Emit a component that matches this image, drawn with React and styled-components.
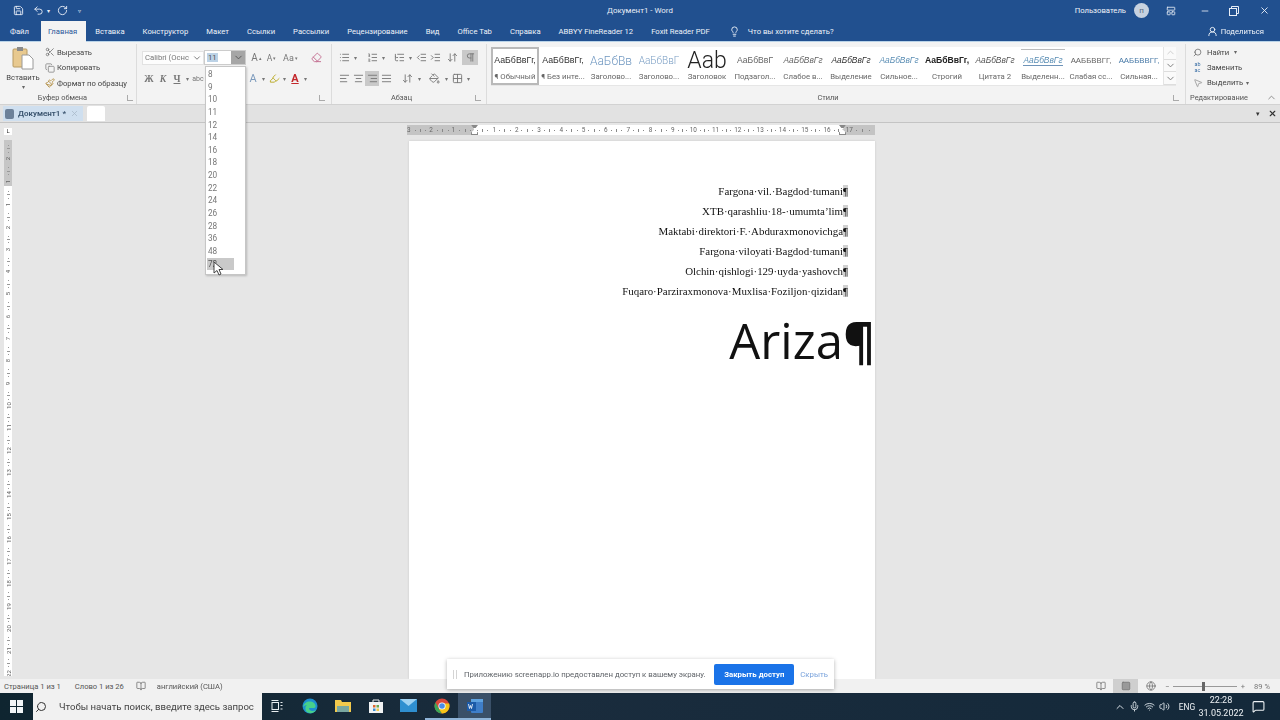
import React from "react";
import styled, { createGlobalStyle } from "styled-components";
import {
  Save, Undo2, RotateCw, Scissors, Copy, Paintbrush, ChevronDown, ChevronUp, Lightbulb, UserRound,
  Minus, X, Search, MousePointer2, List, ListOrdered, ListTree, IndentDecrease, IndentIncrease,
  AlignLeft, AlignCenter, AlignRight, AlignJustify, Eraser, Highlighter, PaintBucket, Grid2x2,
  BookOpen, Globe, Mic, Wifi, Volume2, MessageSquare,
  ArrowDownUp, Pilcrow, Square, LayoutPanelTop,
} from "lucide-react";

const Global = createGlobalStyle`
  html, body { margin: 0; padding: 0; background: #e6e6e6; }
  * { box-sizing: border-box; }
  svg { flex: none; }
  #root { width: 1280px; height: 720px; overflow: hidden; }
`;

const Screen = styled.div`
  position: relative; width: 1280px; height: 720px; display: flex; flex-direction: column;
  overflow: hidden; font-family: "Roboto", "Noto Sans", sans-serif; font-size: 7.7px; color: #444;
  filter: blur(0.4px);
`;
const Header = styled.header`
  height: 42px; flex: none; background: #21508f; color: #f0f4fa; display: flex; flex-direction: column;
  border-bottom: 1px solid #b9d3e8;
`;
const TitleRow = styled.div`
  height: 21px; flex: none; display: grid; grid-template-columns: 1fr auto 1fr; align-items: center;
`;
const Quick = styled.div`display: flex; align-items: center; gap: 9px; color: #e8eef7; padding-left: 13px;`;
const QuickCaret = styled.span`font-size: 6px; margin: 0 ${p => p.$r ?? -2}px 0 ${p => p.$l ?? -6}px;`;
const Title = styled.div`font-size: 7.9px; color: #e8eef7;`;
const WindowControls = styled.div`display: flex; align-items: center; justify-content: flex-end;`;
const UserName = styled.span`margin-right: 8px;`;
const Avatar = styled.span`
  width: 15px; height: 15px; border-radius: 50%; background: #c7d2e0; color: #5a6a80; font-size: 8px;
  display: flex; align-items: center; justify-content: center; margin-right: 3px;
`;
const WinBtn = styled.span`width: ${p => p.$w}px; display: flex; justify-content: center; color: #e8eef7;`;
const TabRow = styled.nav`height: 20px; display: flex; align-items: stretch; padding-left: 10px;`;
const Tab = styled.div`
  display: flex; align-items: center; white-space: nowrap;
  margin-right: ${p => (p.$active ? 9 : 18)}px; padding: ${p => (p.$active ? "0 9px 0 7px" : "0")}; margin-left: ${p => (p.$active ? "-6px" : 0)};
  background: ${p => (p.$active ? "#f3f3f3" : "transparent")}; color: ${p => (p.$active ? "#2b579a" : "#eef3fa")};
  height: ${p => (p.$active ? "21px" : "auto")};
`;
const Share = styled.div`margin-left: auto; display: flex; align-items: center; gap: 3px; padding-right: 16px;`;
const Hint = styled.span`display: flex; align-items: center; gap: 8px; color: #eef3fa; margin-left: 1px;`;

const Ribbon = styled.section`
  height: 63px; flex: none; background: #f3f3f3; display: flex; position: relative; border-bottom: 1px solid #d2d2d2;
`;
const Group = styled.div`
  width: ${p => p.$w}px; flex: none; display: flex; flex-direction: column; padding: ${p => p.$pad || "0"};
  border-right: ${p => (p.$last ? "0" : "1px solid #dcdcdc")}; margin: 2px 0 0; position: relative;
`;
const GroupBody = styled.div`flex: 1; min-height: 0; display: flex;`;
const GroupLabel = styled.div`
  height: 12px; flex: none; text-align: center; font-size: 7.4px; line-height: 11px; color: #555;
  padding-right: ${p => p.$shift || 0}px; white-space: nowrap;
`;
const Launcher = styled.span`
  position: absolute; right: ${p => p.$r || 3}px; bottom: 3px; width: 6px; height: 6px; border-left: 1px solid #aaa; border-bottom: 1px solid #aaa;
`;
const Paste = styled.div`
  width: 38px; display: flex; flex-direction: column; align-items: center; margin-left: 4px; color: #444; padding-top: 2px;
`;
const PasteLabel = styled.div`margin-top: 3px; line-height: 10px;`;
const MiniCaret = styled.span`color: #666; font-size: 6px; line-height: 8px;`;
const ClipList = styled.div`display: flex; flex-direction: column; gap: 3.6px; margin-left: 3px; padding-top: 2px;`;
const ClipRow = styled.div`display: flex; align-items: center; gap: 2px; height: 12px; white-space: nowrap; color: #444;`;
const Rows = styled.div`display: flex; flex-direction: column; padding-top: 6px; gap: 6px;`;
const Row = styled.div`display: flex; align-items: center; height: 15px;`;
const FontField = styled.div`
  width: 62px; height: 14px; display: flex; align-items: center; justify-content: space-between; background: #fdfdfd;
  border: 1px solid #e2e2e2; padding: 0 1px 0 2px; color: #777; white-space: nowrap; overflow: hidden;
`;
const SizeField = styled.div`
  width: 42px; height: 15px; display: flex; align-items: center; background: #fff; margin-right: 3px; border: 1px solid #ccc; color: #555;
`;
const SizeValue = styled.span`flex: 1; padding-left: 2px;`;
const SizeSel = styled.span`background: #bcd2e6; padding: 0 1px;`;
const SizeArrow = styled.span`width: 14px; height: 100%; background: #a6a6a6; display: flex; align-items: center; justify-content: center; color: #555;`;
const Tool = styled.span`
  width: ${p => p.$w || 14}px; height: 15px; margin-right: ${p => p.$mr || 0}px; flex: none;
  display: flex; align-items: center; justify-content: center; gap: 1px;
  background: ${p => (p.$on ? "#c9c9c9" : "transparent")}; color: ${p => p.$c || "#777"};
  font-size: ${p => p.$fs || 9}px; font-weight: ${p => (p.$b ? 700 : 400)}; font-style: ${p => (p.$i ? "italic" : "normal")};
  text-decoration: ${p => (p.$u ? "underline" : "none")}; font-family: ${p => (p.$serif ? '"Liberation Serif", serif' : "inherit")};
`;
const Sup = styled.sup`font-size: 5px; line-height: 0;`;
const Gallery = styled.div`
  width: 685px; height: 39px; background: #fff; margin: 3px 0 0 4px; display: flex; border-bottom: 1px solid #e6e6e6; flex: none;
`;
const StyleCard = styled.div`
  width: 48px; flex: none; height: 38px; display: flex; flex-direction: column; align-items: center; overflow: hidden;
  border: ${p => (p.$on ? "2px solid #b9b9b9" : "2px solid transparent")}; white-space: nowrap;
`;
const Preview = styled.div`
  height: 23px; display: flex; align-items: center; justify-content: center; width: 100%; overflow: hidden; white-space: nowrap; line-height: 1;
  font-family: ${p => p.$font || '"Liberation Sans", sans-serif'}; font-size: ${p => p.$fs}px; color: ${p => p.$c || "#333"};
  font-weight: ${p => (p.$b ? 700 : p.$w || 400)}; font-style: ${p => (p.$i ? "italic" : "normal")};
  border-top: ${p => (p.$rule ? "1px solid #bbb" : "0")};
`;
const PreviewText = styled.span`border-bottom: ${p => (p.$rule ? "1px solid #6e93b8" : "0")}; flex: none;`;
const StyleName = styled.div`font-size: 7.8px; color: #666; line-height: 10px;`;
const GalleryScroll = styled.div`
  width: 13px; margin-left: auto; display: flex; flex-direction: column; border-left: 1px solid #e4e4e4; background: #fafafa;
`;
const ScrollCell = styled.span`flex: 1; display: flex; align-items: center; justify-content: center; border-bottom: 1px solid #ddd; color: ${p => p.$c || "#777"};`;
const EditList = styled.div`display: flex; flex-direction: column; padding: 2px 0 0 5px; gap: 3.4px;`;
const EditRow = styled.div`display: flex; align-items: center; gap: 3px; height: 12px; color: #444; white-space: nowrap;`;
const FindIcon = styled(Search)`margin: 0 2px; transform: scaleX(-1); color: #666;`;
const SelectIcon = styled(MousePointer2)`margin: 0 1px 0 2px; color: #999;`;
const AbIcon = styled.span`font-size: 5.4px; color: #3a6ea5; line-height: 6px; width: 13px; text-align: center; flex: none;`;
const Collapse = styled.span`position: absolute; right: 3px; bottom: 1px; color: #888; display: flex;`;

const DocTabs = styled.div`
  height: 18px; flex: none; background: #e2e2e2; display: flex; align-items: stretch; padding: 1px 0 1px 3px; border-bottom: 1px solid #c4c4c4;
`;
const DocTab = styled.div`
  width: 80px; background: #cfdfef; display: flex; align-items: center; gap: 4px; font-weight: 600; font-size: 8px; color: #36506b; padding: 0 4px 0 2px; white-space: nowrap;
`;
const DocIcon = styled.span`width: 9px; height: 10px; background: #6d8199; border-radius: 2px; flex: none;`;
const DocClose = styled.span`margin-left: auto; color: #a8b8c8; display: flex;`;
const NewTab = styled.div`width: 18px; background: #fff; margin-left: 4px; border-radius: 2px 2px 0 0;`;
const TabTools = styled.div`margin-left: auto; display: flex; align-items: center; gap: 6px; padding-right: 3px; color: #333;`;

const Workspace = styled.main`flex: 1; min-height: 0; display: flex; background: #e6e6e6; overflow: hidden;`;
const VRuler = styled.div`width: 14px; flex: none; padding: 5px 0 0 4px; display: flex; flex-direction: column;`;
const Corner = styled.div`
  width: 8px; height: 7px; background: #fff; margin-bottom: 5px; font-size: 6px; line-height: 6px; text-align: center; color: #333; flex: none;
`;
const VTrack = styled.div`width: 8px; display: flex; flex-direction: column; align-items: center; flex: none; background: ${p => (p.$dark ? "#c6c6c6" : "#fff")}; height: ${p => p.$h}px; overflow: hidden;`;
const VCell = styled.div`height: 22.3px; flex: none; width: 8px; display: flex; flex-direction: column; align-items: center; justify-content: space-between; padding-top: 5px; color: #666; font-size: 6px; line-height: 7px;`;
const VNum = styled.span`transform: rotate(-90deg); white-space: nowrap; height: 7px;`;
const VTick = styled.span`width: ${p => (p.$l ? 3 : 1)}px; height: 1px; background: #999;`;
const Canvas = styled.div`flex: 1; display: flex; flex-direction: column; padding: 2px 0 0 393px; min-width: 0;`;
const HRuler = styled.div`
  width: 468px; height: 10px; display: flex; flex: none; position: relative; overflow: hidden;
  background: linear-gradient(90deg, #c4c4c4 67px, #fff 67px, #fff 435px, #c4c4c4 435px);
`;
const HCell = styled.div`
  width: 22.3px; flex: none; display: flex; flex-direction: ${p => (p.$rev ? "row-reverse" : "row")}; align-items: center; justify-content: space-between;
  font-size: 6.4px; color: #666; padding: 0 ${p => (p.$rev ? "3px" : "0")} 0 ${p => (p.$rev ? "0" : "3px")};
`;
const HTick = styled.span`width: 1px; height: ${p => (p.$l ? 3 : 1)}px; background: #888;`;
const Indent = styled.span`
  position: absolute; left: ${p => p.$x}px; top: 0; width: 7px; height: 10px; border: 1px solid #888; border-top-width: 3px; background: #fff; clip-path: polygon(0 0,100% 0,50% 45%,100% 75%,100% 100%,0 100%,0 75%,50% 45%);
`;
const Page = styled.article`
  width: 466px; flex: 1; min-height: 0; margin: 6px 0 0 2px; background: #fff; padding-top: 40px; box-shadow: 0 0 2px #c8c8c8;
`;
const Para = styled.p`
  margin: 0; height: 20px; padding-right: 27px; text-align: right; font-family: "Liberation Serif", serif; font-size: 10.9px; line-height: 20px; color: #111; white-space: nowrap;
`;
const Mark = styled.span`background: #d0d0d0;`;
const Heading = styled.h1`
  margin: 0; padding: 6px 0 0 0; text-align: right; font-family: "Open Sans", sans-serif; font-weight: 500; font-size: 49px; line-height: 66px; color: #111; white-space: nowrap;
`;
const HeadingMark = styled.span`font-weight: 700; color: #111;`;

const Status = styled.footer`
  height: 14px; flex: none; background: #f1f1f1; display: flex; align-items: center; padding-left: 4px; font-size: 7.6px; color: #555; white-space: nowrap;
`;
const StatusItem = styled.span`margin-right: ${p => p.$mr}px; display: flex;`;
const StatusRight = styled.div`margin-left: auto; display: flex; align-items: center; color: #777; height: 100%;`;
const ViewBtn = styled.span`
  width: 25px; height: 100%; display: flex; align-items: center; justify-content: center; background: ${p => (p.$on ? "#cfcfcf" : "transparent")};
`;
const Zoom = styled.div`display: flex; align-items: center; gap: 2px; width: 84px; padding: 0 2px;`;
const ZoomTrack = styled.span`flex: 1; height: 1px; background: #999; position: relative; margin: 0 2px;`;
const ZoomThumb = styled.span`position: absolute; left: 29px; top: -4px; width: 3px; height: 9px; background: #666;`;
const ZoomPct = styled.span`margin: 0 10px 0 7px;`;

const Taskbar = styled.footer`
  height: 27px; flex: none; background: linear-gradient(90deg,#0f2530,#1a2c3d 40%,#14293a); display: flex; align-items: stretch; color: #eef2f5;
`;
const StartBtn = styled.div`width: 33px; display: flex; align-items: center; justify-content: center;`;
const SearchBox = styled.div`
  width: 229px; background: #f1f1f1; display: flex; align-items: center; gap: 12px; padding-left: 2px; font-size: 9.6px; color: #444; white-space: nowrap; overflow: hidden;
`;
const SearchGlyph = styled(Search)`transform: scaleX(-1); color: #333;`;
const TaskApps = styled.div`display: flex; align-items: stretch; margin-left: -2px;`;
const TaskApp = styled.span`
  width: 33px; display: flex; align-items: center; justify-content: center;
  background: ${p => (p.$active ? "#3a5068" : "transparent")}; border-bottom: ${p => (p.$run ? "2px solid #8fb4d8" : "2px solid transparent")};
`;
const Tray = styled.div`margin-left: auto; display: flex; align-items: center;`;
const TrayIcon = styled.span`width: 15px; display: flex; justify-content: center; color: #d9e0e6;`;
const Lang = styled.span`font-size: 8.4px; margin: 0 1px 0 5px; width: 20px; text-align: center;`;
const Clock = styled.div`font-size: 9px; line-height: 13px; text-align: center; width: 46px;`;
const Notify = styled.span`width: 36px; padding-right: 8px; display: flex; justify-content: center;`;

const SizeMenu = styled.ul`
  position: absolute; left: 205px; top: 66px; width: 41px; height: 209px; margin: 0; padding: 1px 0 0 1px; list-style: none; background: #fff;
  border: 1px solid #c6c6c6; box-shadow: 1px 1px 2px rgba(0,0,0,.2); z-index: 5;
`;
const SizeItem = styled.li`
  width: 27px; height: 12.65px; line-height: 12.65px; padding-left: 1px; font-size: 8.2px; color: ${p => (p.$on ? "#555" : "#777")};
  background: ${p => (p.$on ? "#c9c9c9" : "transparent")};
`;
const Pointer = styled.span`position: absolute; left: 213px; top: 261px; z-index: 6; display: flex;`;

const Toast = styled.aside`
  position: absolute; left: 447px; top: 659px; width: 387px; height: 30px; background: #fff; z-index: 6; box-shadow: 0 1px 4px rgba(0,0,0,.3);
  display: flex; align-items: center; padding-left: 6px; font-size: 7.8px; color: #5f6368; white-space: nowrap;
`;
const Grip = styled.span`width: 4px; height: 9px; border-left: 1px solid #d4d4d4; border-right: 1px solid #d4d4d4; margin-right: 7px;`;
const ToastBtn = styled.span`
  margin-left: auto; width: 80px; height: 21px; border-radius: 2px; background: #1a73e8; color: #fff; font-weight: 700; display: flex; align-items: center; justify-content: center;
`;
const ToastLink = styled.span`margin: 0 6px; color: #7aa3dc;`;

const tabs = ["Файл", "Главная", "Вставка", "Конструктор", "Макет", "Ссылки", "Рассылки", "Рецензирование", "Вид", "Office Tab", "Справка", "ABBYY FineReader 12", "Foxit Reader PDF"];
const gallery = [
  { p: "АаБбВвГг,", n: "¶ Обычный", fs: 8.8, on: true },
  { p: "АаБбВвГг,", n: "¶ Без инте...", fs: 8.8 },
  { p: "АаБбВв", n: "Заголово...", fs: 12, c: "#6f97c0", font: '"Roboto", sans-serif', w: 300 },
  { p: "АаБбВвГ", n: "Заголово...", fs: 10, c: "#7a9ec4", font: '"Roboto", sans-serif', w: 300 },
  { p: "Ааb", n: "Заголовок", fs: 23, c: "#222", font: '"Roboto", sans-serif', w: 300 },
  { p: "АаБбВвГ", n: "Подзагол...", fs: 8.6, c: "#666" },
  { p: "АаБбВвГг", n: "Слабое в...", fs: 8.4, i: true, c: "#666" },
  { p: "АаБбВвГг", n: "Выделение", fs: 8.4, i: true, c: "#333" },
  { p: "АаБбВвГг", n: "Сильное...", fs: 8.4, i: true, c: "#5c8fb5" },
  { p: "АаБбВвГг,", n: "Строгий", fs: 8.6, b: true, c: "#222" },
  { p: "АаБбВвГг", n: "Цитата 2", fs: 8.4, i: true, c: "#555" },
  { p: "АаБбВвГг", n: "Выделенн...", fs: 8.4, i: true, c: "#5c8fb5", rule: true },
  { p: "ААББВВГГ,", n: "Слабая сс...", fs: 7.8, c: "#666" },
  { p: "ААББВВГГ,", n: "Сильная...", fs: 7.8, c: "#4a7ba8" },
];
const sizes = [8, 9, 10, 11, 12, 14, 16, 18, 20, 22, 24, 26, 28, 36, 48, 72];
const lines = [
  "Fargona·vil.·Bagdod·tumani",
  "XTB·qarashliu·18-·umumta’lim",
  "Maktabi·direktori·F.·Abduraxmonovichga",
  "Fargona·viloyati·Bagdod·tumani",
  "Olchin·qishlogi·129·uyda·yashovch",
  "Fuqaro·Parziraxmonova·Muxlisa·Foziljon·qizidan",
];
const range = (n) => Array.from({ length: n }, (_, i) => i);

const RulerCell = ({ n, rev }) => (
  <HCell $rev={rev}>
    <HTick /><HTick $l /><HTick /><span>{n}</span>
  </HCell>
);
const VRulerCell = ({ n }) => (
  <VCell>
    <VTick /><VTick $l /><VTick /><VNum>{n}</VNum>
  </VCell>
);

const ClipboardIcon = () => (
  <svg width="22" height="24" viewBox="0 0 22 24">
    <rect x="1" y="3" width="14" height="18" rx="1" fill="#e8c98f" stroke="#b79a62" />
    <rect x="5" y="1" width="6" height="4" fill="#8a8a8a" />
    <path d="M10 9h7l4 4v10H10z" fill="#fff" stroke="#9a9a9a" />
  </svg>
);
const WinLogo = () => (
  <svg width="13" height="13" viewBox="0 0 13 13" fill="#f2f5f7">
    <rect x="0" y="0" width="6" height="6" /><rect x="7" y="0" width="6" height="6" />
    <rect x="0" y="7" width="6" height="6" /><rect x="7" y="7" width="6" height="6" />
  </svg>
);
const EdgeIcon = () => (
  <svg width="16" height="16" viewBox="0 0 16 16">
    <circle cx="8" cy="8" r="7.5" fill="#1d8fd0" />
    <path d="M1 9c1-5 7-7 11-4 2 2 2 5 0 5H7c0 3 4 4 7 2-2 4-8 4-10 1C3 11 3 8 5 7 3 7 2 8 1 9z" fill="#47d08a" />
  </svg>
);
const FolderIcon = () => (
  <svg width="16" height="14" viewBox="0 0 16 14">
    <path d="M0 1h6l1 2h9v10H0z" fill="#f2c94c" /><rect x="2" y="7" width="12" height="6" fill="#7aa7a0" />
  </svg>
);
const StoreIcon = () => (
  <svg width="16" height="16" viewBox="0 0 16 16">
    <path d="M5 4V2h6v2" fill="none" stroke="#eee" /><rect x="1" y="4" width="14" height="11" fill="#f1f3f4" />
    <rect x="5" y="7" width="2.5" height="2.5" fill="#e0662f" /><rect x="8.5" y="7" width="2.5" height="2.5" fill="#6aa84f" />
    <rect x="5" y="10.5" width="2.5" height="2.5" fill="#3b8ed0" /><rect x="8.5" y="10.5" width="2.5" height="2.5" fill="#f2c94c" />
  </svg>
);
const MailIcon = () => (
  <svg width="17" height="13" viewBox="0 0 17 13">
    <rect y="0" width="17" height="13" fill="#2f8fd0" /><path d="M0 0l8.5 7L17 0z" fill="#9fd2f2" />
  </svg>
);
const ChromeIcon = () => (
  <svg width="16" height="16" viewBox="0 0 16 16">
    <circle cx="8" cy="8" r="7.5" fill="#d8483b" />
    <path d="M1.5 4.5L5 11l3 4.5c-4 0-7.5-3-7.5-7.5 0-1 .2-2.4 1-3.5z" fill="#3aa757" />
    <path d="M15.2 5.5H8l-3 5.5 3 4.5c4 0 7.5-3.5 7.5-7.5 0-1-.1-1.7-.3-2.5z" fill="#f5c518" />
    <circle cx="8" cy="8" r="3.6" fill="#fff" /><circle cx="8" cy="8" r="2.8" fill="#4a8ce8" />
  </svg>
);
const WordIcon = () => (
  <svg width="16" height="14" viewBox="0 0 16 14">
    <rect x="4" y="0" width="12" height="14" rx="1" fill="#3f7ec8" /><rect x="0" y="3" width="9" height="9" fill="#1b5aa8" />
    <rect x="4" y="0" width="12" height="3" fill="#5ea2e0" />
    <path d="M1.5 5l1 4.5 1-3 1 3 1-4.5" fill="none" stroke="#fff" strokeWidth=".8" />
  </svg>
);
const TaskView = () => (
  <svg width="12" height="12" viewBox="0 0 12 12" fill="none" stroke="#e8edf0">
    <rect x="1" y="2.5" width="6.5" height="7" /><path d="M9.5 2.5h2M9.5 5.5h2M9.5 9h2M.5 .5h7M.5 11.5h7" />
  </svg>
);
const RestoreIcon = () => (
  <svg width="10" height="10" viewBox="0 0 10 10" fill="none" stroke="#e8eef7">
    <rect x=".5" y="2.5" width="7" height="7" /><path d="M2.5 2.5v-2h7v7h-2" />
  </svg>
);

export default function App() {
  return (
    <Screen>
      <Global />
      <Header>
        <TitleRow>
          <Quick>
            <Save size={11} />
            <Undo2 size={11} /><QuickCaret>▾</QuickCaret>
            <RotateCw size={11} />
            <QuickCaret $l={1} $r={0}>▿</QuickCaret>
          </Quick>
          <Title>Документ1 - Word</Title>
          <WindowControls>
            <UserName>Пользователь</UserName>
            <Avatar>п</Avatar>
            <WinBtn $w={38}><LayoutPanelTop size={10} /></WinBtn>
            <WinBtn $w={30}><Minus size={10} /></WinBtn>
            <WinBtn $w={28}><RestoreIcon /></WinBtn>
            <WinBtn $w={32}><X size={11} /></WinBtn>
          </WindowControls>
        </TitleRow>
        <TabRow>
          {tabs.map((t) => <Tab key={t} $active={t === "Главная"}>{t}</Tab>)}
          <Hint><Lightbulb size={11} />Что вы хотите сделать?</Hint>
          <Share><UserRound size={11} />Поделиться</Share>
        </TabRow>
      </Header>

      <Ribbon>
        <Group $w={137}>
          <GroupBody>
            <Paste>
              <ClipboardIcon />
              <PasteLabel>Вставить</PasteLabel>
              <MiniCaret>▾</MiniCaret>
            </Paste>
            <ClipList>
              <ClipRow><Scissors size={10} color="#777" />Вырезать</ClipRow>
              <ClipRow><Copy size={10} color="#888" />Копировать</ClipRow>
              <ClipRow><Paintbrush size={10} color="#b08a3c" />Формат по образцу</ClipRow>
            </ClipList>
          </GroupBody>
          <GroupLabel $shift={11}>Буфер обмена</GroupLabel>
          <Launcher />
        </Group>

        <Group $w={195} $pad="0 0 0 5px">
          <GroupBody>
            <Rows>
              <Row>
                <FontField>Calibri (Оснс<ChevronDown size={10} color="#666" /></FontField>
                <SizeField><SizeValue><SizeSel>11</SizeSel></SizeValue><SizeArrow><ChevronDown size={11} /></SizeArrow></SizeField>
                <Tool $w={15} $fs={10}>A<Sup>▴</Sup></Tool>
                <Tool $w={15} $fs={8.5}>A<Sup>▾</Sup></Tool>
                <Tool $w={23} $fs={9} $mr={7}>Aa<Sup>▾</Sup></Tool>
                <Tool $c="#c2688c"><Eraser size={11} /></Tool>
              </Row>
              <Row>
                <Tool $b $serif $fs={9.5}>Ж</Tool>
                <Tool $b $i $serif $fs={9.5}>К</Tool>
                <Tool $b $u $serif $fs={9.5}>Ч</Tool>
                <Tool $w={7} $fs={6}>▾</Tool>
                <Tool $w={14} $fs={7}>abc</Tool>
                <Tool $w={41} />
                <Tool $c="#7d9bbd" $fs={11}>A</Tool>
                <Tool $w={7} $fs={6}>▾</Tool>
                <Tool $c="#b8a820"><Highlighter size={11} /></Tool>
                <Tool $w={7} $fs={6}>▾</Tool>
                <Tool $c="#c3272b" $b $u $fs={11}>A</Tool>
                <Tool $w={7} $fs={6}>▾</Tool>
              </Row>
            </Rows>
          </GroupBody>
          <GroupLabel />
          <Launcher $r={6} />
        </Group>

        <Group $w={155} $pad="0 0 0 5px">
          <GroupBody>
            <Rows>
              <Row>
                <Tool><List size={11} /></Tool><Tool $w={8} $fs={6} $mr={6}>▾</Tool>
                <Tool><ListOrdered size={11} /></Tool><Tool $w={8} $fs={6} $mr={5}>▾</Tool>
                <Tool><ListTree size={11} /></Tool><Tool $w={8} $fs={6}>▾</Tool>
                <Tool><IndentDecrease size={11} /></Tool>
                <Tool><IndentIncrease size={11} /></Tool>
                <Tool $w={20}><ArrowDownUp size={11} /></Tool>
                <Tool $w={16} $on><Pilcrow size={11} /></Tool>
              </Row>
              <Row>
                <Tool><AlignLeft size={11} /></Tool>
                <Tool><AlignCenter size={11} /></Tool>
                <Tool $on><AlignRight size={11} /></Tool>
                <Tool $mr={6}><AlignJustify size={11} /></Tool>
                <Tool $w={16}><ArrowDownUp size={11} /></Tool>
                <Tool $w={8} $fs={6} $mr={3}>▾</Tool>
                <Tool $w={16}><PaintBucket size={11} /></Tool>
                <Tool $w={8} $fs={6}>▾</Tool>
                <Tool $w={14}><Grid2x2 size={11} /></Tool>
                <Tool $w={8} $fs={6}>▾</Tool>
              </Row>
            </Rows>
          </GroupBody>
          <GroupLabel $shift={20}>Абзац</GroupLabel>
          <Launcher $r={5} />
        </Group>

        <Group $w={699}>
          <Gallery>
            {gallery.map((g) => (
              <StyleCard key={g.n + g.fs + g.p} $on={g.on}>
                <Preview $fs={g.fs} $c={g.c} $b={g.b} $i={g.i} $w={g.w} $font={g.font} $rule={g.rule}><PreviewText $rule={g.rule}>{g.p}</PreviewText></Preview>
                <StyleName>{g.n}</StyleName>
              </StyleCard>
            ))}
            <GalleryScroll>
              <ScrollCell $c="#ccc"><ChevronUp size={11} /></ScrollCell>
              <ScrollCell><ChevronDown size={11} /></ScrollCell>
              <ScrollCell><ChevronDown size={11} /></ScrollCell>
            </GalleryScroll>
          </Gallery>
          <GroupBody />
          <GroupLabel $shift={16}>Стили</GroupLabel>
          <Launcher $r={6} />
        </Group>

        <Group $w={66} $last>
          <GroupBody>
            <EditList>
              <EditRow><FindIcon size={9} />Найти<MiniCaret>&nbsp;▾</MiniCaret></EditRow>
              <EditRow><AbIcon>ab<br />ac</AbIcon>Заменить</EditRow>
              <EditRow><SelectIcon size={10} />Выделить<MiniCaret>▾</MiniCaret></EditRow>
            </EditList>
          </GroupBody>
          <GroupLabel>Редактирование</GroupLabel>
        </Group>
        <Collapse><ChevronUp size={11} /></Collapse>
      </Ribbon>

      <DocTabs>
        <DocTab><DocIcon />Документ1 *<DocClose><X size={9} /></DocClose></DocTab>
        <NewTab />
        <TabTools><Tool $w={8} $fs={7} $c="#333">▾</Tool><X size={9} strokeWidth={3} /></TabTools>
      </DocTabs>

      <Workspace>
        <VRuler>
          <Corner>L</Corner>
          <VTrack $dark $h={46}>{range(2).map((i) => <VRulerCell key={i} n={2 - i} />)}</VTrack>
          <VTrack $h={490}>{range(22).map((i) => <VRulerCell key={i} n={i + 1} />)}</VTrack>
        </VRuler>
        <Canvas>
          <HRuler>
            {[3, 2, 1].map((n) => <RulerCell key={n} n={n} rev />)}
            {range(18).map((i) => <RulerCell key={i} n={i < 17 ? i + 1 : ""} />)}
            <Indent $x={64} /><Indent $x={432} />
          </HRuler>
          <Page>
            {lines.map((l) => <Para key={l}>{l}<Mark>¶</Mark></Para>)}
            <Heading>Ariza<HeadingMark>¶</HeadingMark></Heading>
          </Page>
        </Canvas>
      </Workspace>

      <Status>
        <StatusItem $mr={14}>Страница 1 из 1</StatusItem>
        <StatusItem $mr={12}>Слово 1 из 26</StatusItem>
        <StatusItem $mr={11}><BookOpen size={10} color="#777" /></StatusItem>
        <StatusItem $mr={0}>английский (США)</StatusItem>
        <StatusRight>
          <ViewBtn><BookOpen size={10} /></ViewBtn>
          <ViewBtn $on><Square size={10} fill="#999" /></ViewBtn>
          <ViewBtn><Globe size={10} /></ViewBtn>
          <Zoom>−<ZoomTrack><ZoomThumb /></ZoomTrack>+</Zoom>
          <ZoomPct>89 %</ZoomPct>
        </StatusRight>
      </Status>

      <Taskbar>
        <StartBtn><WinLogo /></StartBtn>
        <SearchBox><SearchGlyph size={12} />Чтобы начать поиск, введите здесь запрос</SearchBox>
        <TaskApps>
          <TaskApp><TaskView /></TaskApp>
          <TaskApp><EdgeIcon /></TaskApp>
          <TaskApp><FolderIcon /></TaskApp>
          <TaskApp><StoreIcon /></TaskApp>
          <TaskApp><MailIcon /></TaskApp>
          <TaskApp $run><ChromeIcon /></TaskApp>
          <TaskApp $active $run><WordIcon /></TaskApp>
        </TaskApps>
        <Tray>
          <TrayIcon><ChevronUp size={12} /></TrayIcon>
          <TrayIcon><Mic size={11} /></TrayIcon>
          <TrayIcon><Wifi size={11} /></TrayIcon>
          <TrayIcon><Volume2 size={11} /></TrayIcon>
          <Lang>ENG</Lang>
          <Clock>22:28<br />31.05.2022</Clock>
          <Notify><MessageSquare size={13} /></Notify>
        </Tray>
      </Taskbar>

      <SizeMenu>
        {sizes.map((s) => <SizeItem key={s} $on={s === 72}>{s}</SizeItem>)}
      </SizeMenu>
      <Pointer>
        <svg width="11" height="15" viewBox="0 0 11 15">
          <path d="M1 1v11l3-2.5 2 4.5 2-1-2-4.5h4z" fill="#fff" stroke="#444" />
        </svg>
      </Pointer>
      <Toast>
        <Grip />
        Приложению screenapp.io предоставлен доступ к вашему экрану.
        <ToastBtn>Закрыть доступ</ToastBtn>
        <ToastLink>Скрыть</ToastLink>
      </Toast>
    </Screen>
  );
}
